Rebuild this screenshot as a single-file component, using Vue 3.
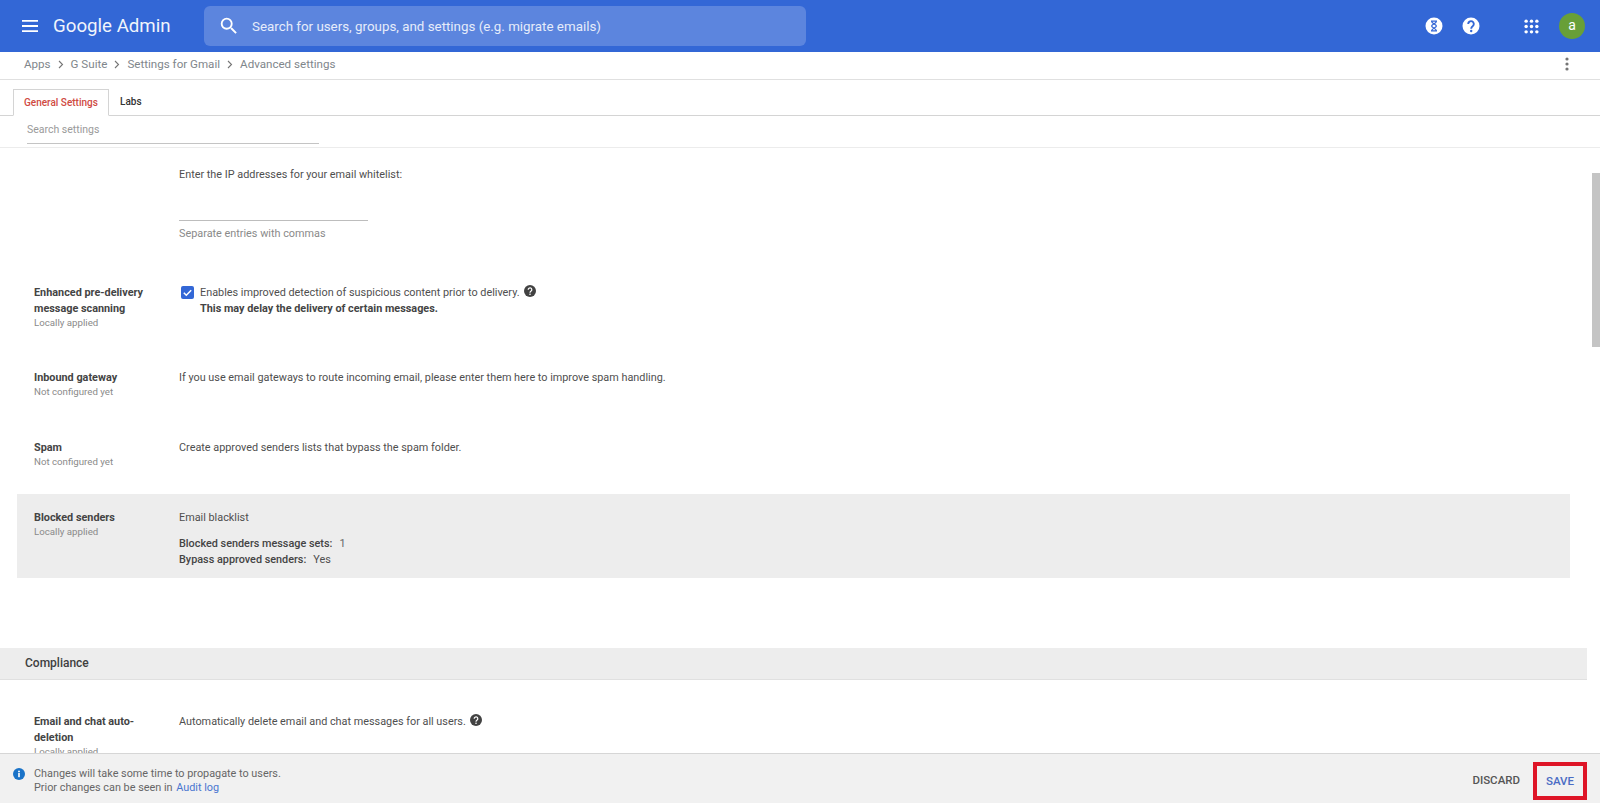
<script setup>
const crumbs = ['Apps', 'G Suite', 'Settings for Gmail', 'Advanced settings']
</script>

<template>
  <div class="page">
    <header class="top">
      <svg class="burger" width="16" height="12" viewBox="0 0 16 12"><path d="M0 0h16v1.8H0zM0 5.1h16v1.8H0zM0 10.2h16V12H0z" fill="#fff"/></svg>
      <div class="brand">Google Admin</div>
      <div class="search">
        <svg width="22" height="22" viewBox="0 0 24 24"><path fill="#fff" d="M15.5 14h-.79l-.28-.27A6.47 6.47 0 0 0 16 9.5 6.5 6.5 0 1 0 9.5 16c1.61 0 3.09-.59 4.23-1.57l.27.28v.79l5 4.99L20.49 19l-4.99-5zm-6 0C7.01 14 5 11.99 5 9.5S7.01 5 9.5 5 14 7.01 14 9.5 11.99 14 9.5 14z"/></svg>
        <span>Search for users, groups, and settings (e.g. migrate emails)</span>
      </div>
      <div class="actions">
        <svg class="a1" width="18" height="18" viewBox="0 0 18 18"><circle cx="9" cy="9" r="8.5" fill="#fff"/><path d="M6 4.2h6M6 13.8h6M6.6 4.2c0 2.4 4.8 3 4.8 4.8s-4.8 2.4-4.8 4.8M11.4 4.2c0 2.4-4.8 3-4.8 4.8s4.8 2.4 4.8 4.8" fill="none" stroke="#3367d6" stroke-width="1.2"/></svg>
        <svg class="a2" width="18" height="18" viewBox="0 0 18 18"><circle cx="9" cy="9" r="8.5" fill="#fff"/><path d="M6.2 7a2.8 2.8 0 1 1 4.6 2.1c-1 .8-1.6 1.2-1.6 2.6" fill="none" stroke="#3367d6" stroke-width="1.9"/><circle cx="9.2" cy="14" r="1.2" fill="#3367d6"/></svg>
        <svg class="a3" width="15" height="15" viewBox="0 0 14 14" fill="#fff"><circle cx="2" cy="2" r="1.6"/><circle cx="7" cy="2" r="1.6"/><circle cx="12" cy="2" r="1.6"/><circle cx="2" cy="7" r="1.6"/><circle cx="7" cy="7" r="1.6"/><circle cx="12" cy="7" r="1.6"/><circle cx="2" cy="12" r="1.6"/><circle cx="7" cy="12" r="1.6"/><circle cx="12" cy="12" r="1.6"/></svg>
        <div class="avatar">a</div>
      </div>
    </header>

    <nav class="crumbs">
      <template v-for="(c, i) in crumbs" :key="c">
        <span>{{ c }}</span>
        <svg v-if="i < crumbs.length - 1" class="chev" width="6" height="9" viewBox="0 0 6 9"><path d="M1 1l3.5 3.5L1 8" fill="none" stroke="#757575" stroke-width="1.1"/></svg>
      </template>
      <svg class="more" width="4" height="14" viewBox="0 0 4 14" fill="#757575"><circle cx="2" cy="2" r="1.6"/><circle cx="2" cy="7" r="1.6"/><circle cx="2" cy="12" r="1.6"/></svg>
    </nav>

    <div class="tabs">
      <div class="tab active">General Settings</div>
      <div class="tab">Labs</div>
    </div>
    <div class="filter"><div class="filter-input">Search settings</div></div>

    <div class="scroller">
      <main class="content">
        <section class="row whitelist">
          <div class="label"></div>
          <div class="value">
            <div>Enter the IP addresses for your email whitelist:</div>
            <div class="ip-input"></div>
            <div class="hint">Separate entries with commas</div>
          </div>
        </section>

        <section class="row enhanced">
          <div class="label"><b>Enhanced pre-delivery message scanning</b><small>Locally applied</small></div>
          <div class="value check-row">
            <svg class="check" width="13" height="13" viewBox="0 0 13 13"><rect width="13" height="13" rx="2" fill="#3367d6"/><path d="M2.8 6.7l2.5 2.5 4.9-5" fill="none" stroke="#fff" stroke-width="1.5"/></svg>
            <div>
              <div>Enables improved detection of suspicious content prior to delivery.<svg class="q" width="12" height="12" viewBox="0 0 12 12"><circle cx="6" cy="6" r="6" fill="#424242"/><path d="M4.2 4.7a1.8 1.8 0 1 1 2.9 1.4c-.7.5-1.1.8-1.1 1.6" fill="none" stroke="#fff" stroke-width="1.2"/><circle cx="6" cy="9.3" r=".8" fill="#fff"/></svg></div>
              <div class="strong">This may delay the delivery of certain messages.</div>
            </div>
          </div>
        </section>

        <section class="row plain">
          <div class="label"><b>Inbound gateway</b><small>Not configured yet</small></div>
          <div class="value">If you use email gateways to route incoming email, please enter them here to improve spam handling.</div>
        </section>

        <section class="row plain spam">
          <div class="label"><b>Spam</b><small>Not configured yet</small></div>
          <div class="value">Create approved senders lists that bypass the spam folder.</div>
        </section>

        <section class="row blocked">
          <div class="label"><b>Blocked senders</b><small>Locally applied</small></div>
          <div class="value">
            <div>Email blacklist</div>
            <div class="meta"><span class="medium">Blocked senders message sets:</span><span class="num">1</span></div>
            <div class="meta second"><span class="medium">Bypass approved senders:</span><span>Yes</span></div>
          </div>
        </section>

        <h2 class="band">Compliance</h2>

        <section class="row last">
          <div class="label"><b>Email and chat auto-deletion</b><small>Locally applied</small></div>
          <div class="value">Automatically delete email and chat messages for all users.<svg class="q" width="12" height="12" viewBox="0 0 12 12"><circle cx="6" cy="6" r="6" fill="#424242"/><path d="M4.2 4.7a1.8 1.8 0 1 1 2.9 1.4c-.7.5-1.1.8-1.1 1.6" fill="none" stroke="#fff" stroke-width="1.2"/><circle cx="6" cy="9.3" r=".8" fill="#fff"/></svg></div>
        </section>
      </main>
      <div class="gutter"><div class="thumb"></div></div>
    </div>

    <footer class="bar">
      <svg class="info" width="12" height="12" viewBox="0 0 12 12"><circle cx="6" cy="6" r="6" fill="#1a73c8"/><rect x="5.2" y="5" width="1.6" height="4.2" fill="#fff"/><circle cx="6" cy="3.4" r=".95" fill="#fff"/></svg>
      <div class="notice">
        <div>Changes will take some time to propagate to users.</div>
        <div>Prior changes can be seen in <a>Audit log</a></div>
      </div>
      <div class="discard">DISCARD</div>
      <div class="save">SAVE</div>
    </footer>
  </div>
</template>

<style scoped>
.page {
  width: 1600px;
  height: 803px;
  display: flex;
  flex-direction: column;
  overflow: hidden;
  background: #fff;
  font-family: Roboto, "Liberation Sans", sans-serif;
  font-size: 10.85px;
  color: #4f4f4f;
}
.top {
  flex: 0 0 52px;
  display: flex;
  align-items: center;
  background: #3367d6;
  padding-left: 22px;
}
.burger { flex: none; }
.brand {
  width: 151px;
  margin-left: 15px;
  font-size: 18.7px;
  color: #fff;
  opacity: .93;
}
.search {
  width: 602px;
  height: 40px;
  display: flex;
  align-items: center;
  gap: 12px;
  padding-left: 14px;
  box-sizing: border-box;
  border-radius: 6px;
  background: #5c85de;
  color: #e6ecfa;
  font-size: 13.35px;
}
.actions {
  margin-left: auto;
  display: flex;
  align-items: center;
  padding-right: 15px;
}
.a2 { margin-left: 19px; }
.a3 { margin-left: 44px; }
.avatar {
  width: 26px;
  height: 26px;
  margin-left: 20px;
  border-radius: 50%;
  background: #689f38;
  color: #fff;
  font-size: 14px;
  line-height: 25px;
  text-align: center;
}
.crumbs {
  flex: 0 0 28px;
  display: flex;
  align-items: center;
  box-sizing: border-box;
  padding: 0 31px 3px 24px;
  border-bottom: 1px solid #e0e0e0;
  font-size: 11.6px;
  color: #80868b;
}
.chev { margin: 0 7px; }
.more { margin-left: auto; }
.tabs {
  flex: 0 0 36px;
  box-sizing: border-box;
  display: flex;
  align-items: flex-end;
  padding-left: 13px;
  border-bottom: 1px solid #d4d4d4;
  font-size: 10px;
  font-weight: 500;
  color: #333;
}
.tab {
  height: 26px;
  line-height: 25px;
  padding: 0 11px;
  box-sizing: border-box;
}
.tab.active {
  width: 96px;
  margin-bottom: -1px;
  height: 27px;
  border: 1px solid #d4d4d4;
  border-bottom: 1px solid #fff;
  color: #cf4a42;
  padding: 0 0 0 10px;
}
.filter {
  flex: 0 0 32px;
  box-sizing: border-box;
  padding-left: 27px;
  border-bottom: 1px solid #ececec;
}
.filter-input {
  width: 292px;
  height: 28px;
  box-sizing: border-box;
  line-height: 27px;
  border-bottom: 1px solid #c4c4c4;
  font-size: 10.5px;
  color: #9a9a9a;
}
.scroller {
  flex: 1;
  min-height: 0;
  display: flex;
  overflow: hidden;
}
.content { width: 1587px; flex: none; }
.gutter { flex: 1; }
.thumb {
  width: 8px;
  height: 174px;
  margin: 25px 0 0 5px;
  background: #c4c4c4;
}
.row { display: flex; padding-left: 34px; line-height: 16px; }
.label { width: 145px; flex: none; color: #444; }
.label b { display: block; width: 122px; font-weight: 700; }
.label small { display: block; font-size: 9.7px; line-height: 11px; margin-top: 0; color: #8a8a8a; }
.value { flex: 1; }
.whitelist { height: 122px; padding-top: 19px; box-sizing: border-box; }
.ip-input { width: 189px; height: 37px; border-bottom: 1px solid #bdbdbd; }
.hint { margin-top: 5px; color: #8a8a8a; }
.enhanced { height: 85px; padding-top: 15px; box-sizing: border-box; }
.check-row { display: flex; }
.check { flex: none; margin: 1px 6px 0 2px; }
.q { margin-left: 4px; vertical-align: -1px; }
.strong { font-weight: 700; color: #444; }
.plain { height: 70px; padding-top: 15px; box-sizing: border-box; }
.plain.spam { height: 69px; }
.blocked {
  height: 84px;
  margin: 0 17px;
  padding: 16px 0 0 17px;
  box-sizing: border-box;
  background: #ededed;
}
.meta { display: flex; gap: 7px; margin-top: 10px; }
.meta.second { margin-top: 0; }
.medium { font-weight: 500; color: #444; }
.num { color: #666; }
.band {
  height: 32px;
  margin: 70px 0 17px;
  padding-left: 25px;
  box-sizing: border-box;
  background: #ededed;
  border-bottom: 1px solid #e0e0e0;
  font-size: 12px;
  font-weight: 500;
  line-height: 31px;
  color: #3f3f3f;
}
.last { padding-top: 17px; }
.bar {
  flex: 0 0 50px;
  box-sizing: border-box;
  display: flex;
  align-items: flex-start;
  padding: 0 13px 0 13px;
  background: #f1f1f1;
  border-top: 1px solid #d6d6d6;
}
.info { flex: none; margin: 14px 9px 0 0; }
.notice { margin-top: 13px; line-height: 13.5px; color: #666; }
.notice a { margin-left: 1px; color: #4a76d0; }
.discard {
  margin: 19px 13px 0 auto;
  font-size: 11.5px;
  font-weight: 500;
  color: #555;
}
.save {
  width: 54px;
  height: 38px;
  margin-top: 8px;
  box-sizing: border-box;
  border: 4px solid #de1527;
  text-align: center;
  line-height: 30px;
  font-size: 11.5px;
  font-weight: 500;
  color: #4a6cc4;
}
</style>

<style>
html, body { margin: 0; overflow: hidden; }
</style>
